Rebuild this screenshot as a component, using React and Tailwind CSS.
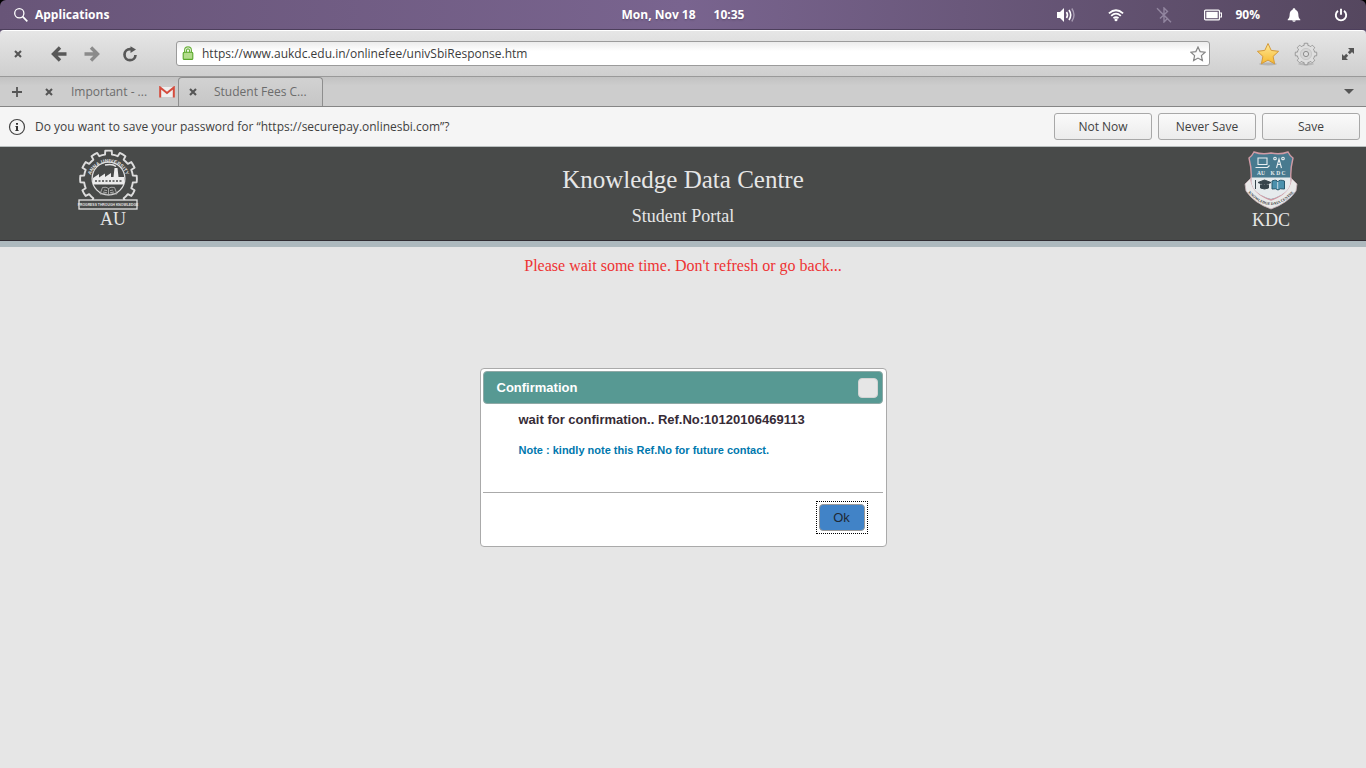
import React from 'react';

function polar(cx, cy, r, deg) {
  const a = (deg * Math.PI) / 180;
  return `${(cx + r * Math.sin(a)).toFixed(2)} ${(cy - r * Math.cos(a)).toFixed(2)}`;
}

function gearPath(cx, cy, outer, inner, teeth) {
  const step = 360 / teeth;
  let d = '';
  for (let i = 0; i < teeth; i++) {
    const a = i * step;
    d += `${i ? 'L' : 'M'}${polar(cx, cy, inner, a - step * 0.27)}`;
    d += `L${polar(cx, cy, outer, a - step * 0.22)}`;
    d += `A${outer} ${outer} 0 0 1 ${polar(cx, cy, outer, a + step * 0.22)}`;
    d += `L${polar(cx, cy, inner, a + step * 0.27)}`;
    d += `A${inner} ${inner} 0 0 1 ${polar(cx, cy, inner, a + step * 0.73)}`;
  }
  return d + 'Z';
}

const STAR = 'M12 1.5l3.2 6.9 7.4.9-5.5 5.1 1.5 7.4L12 18.1l-6.6 3.7 1.5-7.4L1.4 9.3l7.4-.9z';

function CloseIcon() {
  return (
    <svg className="size-2" viewBox="0 0 8 8" aria-hidden="true">
      <path d="M1 1l6 6M7 1L1 7" stroke="#555" strokeWidth="2.1" />
    </svg>
  );
}

function TopBar() {
  return (
    <div className="bg-black">
      <header className="grid h-[30px] grid-cols-[1fr_auto_1fr] items-center rounded-t-md border-b border-[#4d3f5c] bg-linear-to-r from-[#685578] via-[#79648f] to-[#55475f] text-xs font-bold text-white text-shadow-sm">
        <button className="flex items-center gap-[7px] pl-3.5">
          <svg className="size-3.5" viewBox="0 0 14 14" fill="none" stroke="white" aria-hidden="true">
            <circle cx="5.3" cy="5.3" r="4.6" strokeWidth="1.3" />
            <path d="M8.7 8.7l4.6 4.6" strokeWidth="1.7" />
          </svg>
          Applications
        </button>
        <div className="flex gap-[18px]">
          <span>Mon, Nov 18</span>
          <span>10:35</span>
        </div>
        <div className="flex items-center justify-end pr-[18px]">
          <button aria-label="Volume" className="mr-8">
            <svg className="h-4 w-5" viewBox="0 0 20 16" aria-hidden="true">
              <path d="M1 5h3l4-4v14l-4-4H1z" fill="white" />
              <path d="M10.5 5q2 3 0 6M13 3q3.4 5 0 10" fill="none" stroke="white" strokeWidth="1.6" />
              <path d="M15.8 1.5q4.4 6.5 0 13" fill="none" stroke="#a79bb2" strokeWidth="1.4" />
            </svg>
          </button>
          <button aria-label="Wireless" className="mr-8">
            <svg className="h-4 w-4" viewBox="0 0 16 16" fill="none" stroke="white" strokeWidth="1.8" aria-hidden="true">
              <path d="M.9 6.4q7.1-6.4 14.2 0M3.2 8.8q4.8-4.4 9.6 0M5.5 11.2q2.5-2.2 5 0" />
              <circle cx="8" cy="12.7" r="1.5" fill="white" stroke="none" />
            </svg>
          </button>
          <button aria-label="Bluetooth off" className="mr-8">
            <svg className="h-4 w-4" viewBox="0 0 16 16" fill="none" stroke="#9286a0" strokeWidth="1.4" aria-hidden="true">
              <path d="M4 4.5l7.5 7L8 15V1l3.500 3.500L4 11.5M1 1.200l14 14" />
            </svg>
          </button>
          <button aria-label="Battery" className="mr-[13px] flex items-center gap-[13px]">
            <svg className="h-3 w-[18px]" viewBox="0 0 18 12" aria-hidden="true">
              <rect x=".6" y="1.1" width="14.8" height="9.8" rx="1" fill="none" stroke="white" strokeWidth="1.2" />
              <rect x="2.3" y="2.800" width="11.4" height="6.4" fill="white" />
              <path d="M15.5 4h2v4h-2" fill="none" stroke="white" strokeWidth="1.2" />
            </svg>
            90%
          </button>
          <button aria-label="Notifications" className="mr-[33px] ml-3.5">
            <svg className="size-3.5" viewBox="0 0 14 14" fill="white" aria-hidden="true">
              <path d="M7 .3c.9 0 1.400.6 1.400 1.400 2 .7 2.800 2.300 2.900 4.300.1 3 .6 4.300 2 5.500v.7H.7v-.7c1.400-1.200 1.900-2.500 2-5.500.1-2 .9-3.600 2.900-4.300C5.600.9 6.100.3 7 .3zM5.200 12.500h3.600q-.3 1.300-1.800 1.300t-1.800-1.300z" />
            </svg>
          </button>
          <button aria-label="Power">
            <svg className="size-3.5" viewBox="0 0 14 14" fill="none" stroke="white" strokeWidth="1.9" aria-hidden="true">
              <path d="M4 2.900a5.200 5.200 0 1 0 6 0M7 .8v6" />
            </svg>
          </button>
        </div>
      </header>
    </div>
  );
}

function Toolbar() {
  return (
    <div className="flex h-[47px] items-center rounded-t border-t border-b border-t-white border-b-[#999] bg-linear-to-b from-[#e6e6e6] to-[#cfcfcf] pr-3">
      <button aria-label="Close window" className="ml-3.5">
        <CloseIcon />
      </button>
      <button aria-label="Back" className="ml-[29px]">
        <svg className="size-4" viewBox="0 0 16 16" fill="none" stroke="#585858" strokeWidth="3.4" aria-hidden="true">
          <path d="M15.500 8H3M9 1.500L2.500 8 9 14.500" />
        </svg>
      </button>
      <button aria-label="Forward" className="ml-[17px]">
        <svg className="size-4" viewBox="0 0 16 16" fill="none" stroke="#8b8b8b" strokeWidth="3.4" aria-hidden="true">
          <path d="M.5 8H13M7 1.500L13.500 8 7 14.500" />
        </svg>
      </button>
      <button aria-label="Reload" className="ml-[22px]">
        <svg className="size-4" viewBox="0 0 16 16" aria-hidden="true">
          <path d="M9 3.200H8a5.500 5.500 0 1 0 5.500 5.800" fill="none" stroke="#585858" strokeWidth="2.7" />
          <path d="M8.500.2L14 3.600 8.500 7z" fill="#585858" />
        </svg>
      </button>
      <div className="ml-[38px] flex h-[25px] flex-1 items-center rounded-[3px] border border-[#9b9b9b] bg-linear-to-b from-[#ececec] to-white to-40% pr-[3px] pl-[5px]">
        <svg className="mb-0.5 h-3.5 w-3 shrink-0" viewBox="0 0 12 14" aria-hidden="true">
          <path d="M2.600 7V4.200a3.400 3.400 0 0 1 6.800 0V7M4.500 7V4.300a1.500 1.500 0 0 1 3 0V7" fill="none" stroke="#6db33f" strokeWidth="1.2" />
          <rect x="1.200" y="6.200" width="9.6" height="7.2" rx="1" fill="#b3dc8c" stroke="#59a82b" strokeWidth="1.1" />
        </svg>
        <input
          aria-label="Address"
          defaultValue="https://www.aukdc.edu.in/onlinefee/univSbiResponse.htm"
          className="ml-2 min-w-0 flex-1 bg-transparent text-xs text-[#3c3c3c] outline-none"
        />
        <button aria-label="Bookmark this page">
          <svg className="size-4" viewBox="0 0 24 24" fill="#fbfbfb" stroke="#858585" strokeWidth="1.8" aria-hidden="true">
            <path d={STAR} />
          </svg>
        </button>
      </div>
      <button aria-label="Bookmarks" className="ml-[46px]">
        <svg className="size-6" viewBox="0 0 24 24" aria-hidden="true">
          <defs>
            <linearGradient id="gold" x1="0" y1="0" x2="0" y2="1">
              <stop offset="0" stopColor="#ffe998" />
              <stop offset="1" stopColor="#f6b92f" />
            </linearGradient>
          </defs>
          <ellipse cx="12" cy="22" rx="9" ry="1.5" fill="#b5b5b5" />
          <path d={STAR} fill="url(#gold)" stroke="#d49a3a" strokeLinejoin="round" />
        </svg>
      </button>
      <button aria-label="Menu" className="ml-3.5">
        <svg className="size-6" viewBox="0 0 24 24" aria-hidden="true">
          <ellipse cx="12" cy="22" rx="8" ry="1.5" fill="#b8b8b8" />
          <path d={gearPath(12, 12, 10.8, 8.8, 8)} fill="#dedede" stroke="#9a9a9a" strokeLinejoin="round" />
          <circle cx="12" cy="12" r="5.6" fill="#d5d5d5" stroke="#c8c8c8" />
          <circle cx="12" cy="12" r="2.6" fill="#dedede" stroke="#8d8d8d" />
        </svg>
      </button>
      <button aria-label="Full screen" className="ml-6">
        <svg className="size-3" viewBox="0 0 12 12" fill="#555" aria-hidden="true">
          <path d="M6 0h6v6L10 4 7.800 6.200 5.800 4.200 8 2zM6 12H0V6l2 2 2.200-2.200 2 2L4 10z" />
        </svg>
      </button>
    </div>
  );
}

function TabBar() {
  return (
    <nav className="flex h-[30px] items-stretch border-b border-[#858585] bg-linear-to-b from-[#c2c2c2] to-[#cdcdcd] to-30% pr-3 text-xs text-[#6c6c6c]">
      <button aria-label="New tab" className="pl-3">
        <svg className="size-2.5" viewBox="0 0 10 10" aria-hidden="true">
          <path d="M5 0v10M0 5h10" stroke="#555" strokeWidth="1.8" />
        </svg>
      </button>
      <div className="flex w-[156px] items-center pr-[3px] pl-[23px]">
        <button aria-label="Close tab">
          <CloseIcon />
        </button>
        <a href="#mail" className="ml-[18px]">Important - ...</a>
        <svg className="ml-auto h-3 w-4 shrink-0" viewBox="0 0 16 12" aria-hidden="true">
          <path d="M1 1h14v10H1z" fill="#efefef" />
          <path d="M1.200 11.500V1.500L8 7l6.800-5.500v10" fill="none" stroke="#d54b3d" strokeWidth="2" />
        </svg>
      </div>
      <div className="flex w-[145px] items-center rounded-t border-x border-t border-[#8e8e8e] bg-linear-to-b from-[#d2d2d2] to-[#c6c6c6] pl-2.5">
        <button aria-label="Close tab">
          <CloseIcon />
        </button>
        <a href="#fees" className="ml-[17px]">Student Fees C...</a>
      </div>
      <button aria-label="All tabs" className="ml-auto">
        <svg className="h-[5px] w-2.5" viewBox="0 0 10 5" aria-hidden="true">
          <path d="M0 0h10L5 5z" fill="#555" />
        </svg>
      </button>
    </nav>
  );
}

function PasswordBar() {
  return (
    <div className="flex h-10 items-center gap-1.5 border-b border-[#b9bfbf] bg-[#f5f5f5] px-1.5 text-xs text-[#3f3f3f]">
      <svg className="ml-0.5 size-[18px]" viewBox="0 0 18 18" aria-hidden="true">
        <circle cx="9" cy="9" r="7.5" fill="none" stroke="#444" strokeWidth="1.2" />
        <path d="M8 5h2v1.800H8zM7.500 8H10v4h.6v1H7.400v-1H8V9h-.5z" fill="#333" />
      </svg>
      <p className="mr-auto ml-[3px]">Do you want to save your password for “https://securepay.onlinesbi.com”?</p>
      {['Not Now', 'Never Save', 'Save'].map((label) => (
        <button key={label} className="h-[27px] w-[98px] rounded-[3px] border border-[#a8a8a8] bg-linear-to-b from-[#fafafa] to-[#ececec]">
          {label}
        </button>
      ))}
    </div>
  );
}

function UniversityLogo() {
  return (
    <svg className="h-[60px] w-[60px] overflow-visible" viewBox="0 0 60 60" role="img" aria-label="Anna University">
      <defs>
        <path id="auArc" d="M12 31a18.500 18.500 0 0 1 37 0" />
      </defs>
      <path d={gearPath(30.5, 29, 28.4, 24.6, 12)} fill="none" stroke="#dcdcdc" strokeWidth="1.9" strokeLinejoin="round" />
      <circle cx="30.5" cy="28.500" r="16.4" fill="none" stroke="#dcdcdc" strokeWidth="1.3" />
      <text fill="#e4e4e4" fontSize="5" fontWeight="bold" fontFamily="Liberation Sans, sans-serif">
        <textPath href="#auArc" startOffset="50%" textAnchor="middle">ANNA UNIVERSITY</textPath>
      </text>
      <path d="M15 34.500V28l6-4v3.500l6-4v3.500l6-4v4h2.500l1-9h3l1 9H46v7.500z" fill="#ececec" />
      <path d="M38 16.500q-3-3-11-1.500" stroke="#e4e4e4" strokeWidth="1.3" fill="none" />
      <path d="M17 31h28" stroke="#484a49" strokeWidth="1.3" strokeDasharray="2 1.5" />
      <path d="M24.500 37.500q4-1 6 1 2-2 6-1l2.500 6.500q-5-1-8.500 1-3.500-2-8.500-1zM30.500 38.500v6M26 40l3 .6M25 42l4 .8M35 40l-3 .6M36 42l-4 .8" fill="none" stroke="#b0b0b0" strokeWidth=".9" />
      <rect x="1" y="50" width="58" height="9" fill="#484a49" stroke="#e4e4e4" strokeWidth="1.3" />
      <text x="30" y="56" textAnchor="middle" fill="#e4e4e4" fontSize="3.400" fontWeight="bold" fontFamily="Liberation Sans, sans-serif">PROGRESS THROUGH KNOWLEDGE</text>
    </svg>
  );
}

function CentreLogo() {
  return (
    <svg className="h-[60px] w-[54px] overflow-visible" viewBox="0 0 54 60" role="img" aria-label="Knowledge Data Centre">
      <defs>
        <path id="kdcArc" d="M2 39Q27 69 52 39" />
      </defs>
      <path d="M7 27L1 33l1 7q8 12 25 18 17-6 25-18l1-7-6-6z" fill="#e9e9e9" stroke="#c9b3b8" strokeWidth=".8" />
      <path d="M10 1q8 3 17 1 9 2 17-1 2 4 5 6-3 12-2 22-2 14-20 20Q9 43 7 29 8 19 5 7q3-2 5-6z" fill="#487a8f" stroke="#d09ba5" strokeWidth="1.4" />
      <path d="M7.500 26.500h39v5Q45 43 27 48 9 43 7.500 31.500z" fill="#e6ebed" />
      <g fill="none" stroke="#e9eef0" strokeWidth="1.1">
        <path d="M14 7h9v6.500h-9zM11.500 16.500h12l2-2M32.500 17l2.500-9 2.500 9M33.500 13.500h3" />
        <circle cx="31" cy="7.500" r="1.300" />
        <circle cx="39" cy="7.500" r="1.300" />
      </g>
      <text y="24" textAnchor="middle" fill="#e9eef0" fontSize="5.500" fontWeight="bold" fontFamily="Liberation Serif, serif">
        <tspan x="17">AU</tspan>
        <tspan x="34">K D C</tspan>
      </text>
      <path d="M11.500 29v9" stroke="#38454c" />
      <path d="M14 31.500l6.500-2.500 6.500 2.500-6.500 2.500zM16.500 33.500v3.500q4 2 8 0v-3.500" fill="#38454c" stroke="#38454c" />
      <path d="M28 30q5-2 5.500 1 2-3 7-1v8q-5-1-6.500 1-2-2-6-1z" fill="#4b91ad" stroke="#27586d" />
      <path d="M33.700 31v7" stroke="#e6ebed" strokeWidth=".8" />
      <text fill="#403d40" fontSize="3.800" fontWeight="bold" fontFamily="Liberation Serif, serif">
        <textPath href="#kdcArc" startOffset="50%" textAnchor="middle">KNOWLEDGE DATA CENTRE</textPath>
      </text>
    </svg>
  );
}

function PortalHeader() {
  return (
    <header className="grid h-[100px] grid-cols-[1fr_auto_1fr] border-b-[6px] border-[#adb9be] bg-[#484a49] text-[#e6e6e6] shadow-[inset_0_-1px_0_#302c32]">
      <div className="ml-[78px] w-[60px] pt-[3px]">
        <UniversityLogo />
        <p className="-mt-[3px] pl-[22px] text-lg leading-6">AU</p>
      </div>
      <div className="pt-[17px] text-center">
        <h1 className="text-[25px] leading-8">Knowledge Data Centre</h1>
        <p className="mt-2 text-lg leading-6">Student Portal</p>
      </div>
      <div className="mr-[68px] flex w-[54px] flex-col items-center justify-self-end pt-1">
        <CentreLogo />
        <p className="-mt-[3px] text-lg leading-6">KDC</p>
      </div>
    </header>
  );
}

function ConfirmationDialog() {
  return (
    <section role="dialog" aria-labelledby="dialog-title" className="mx-auto mt-[90px] w-[407px] rounded border border-[#aaa] bg-white p-0.5 pr-[3px] pb-3 font-['Liberation_Sans',Arial,sans-serif] text-[13px]">
      <div className="flex h-[33px] items-center justify-between rounded border border-[#8fa9a6] bg-[#579993] pr-1 pl-[13px]">
        <h2 id="dialog-title" className="font-bold text-white">Confirmation</h2>
        <button aria-label="Close" className="size-5 rounded border border-[#d3d3d3] bg-[#e6e6e6]" />
      </div>
      <div className="h-[89px] border-b border-[#aaa] pt-1.5 pl-9 font-bold">
        <p className="leading-5 text-[#362b36]">wait for confirmation.. Ref.No:10120106469113</p>
        <p className="mt-3 text-[11px] leading-4 text-[#0078ae]">Note : kindly note this Ref.No for future contact.</p>
      </div>
      <div className="flex justify-end pt-[11px] pr-[18px] pb-[3px]">
        <div className="-m-[3px] border border-dotted border-black p-0.5">
          <button className="block h-[27px] w-[46px] rounded border border-[#999] bg-[#4183c7] text-[#1f2a36]">Ok</button>
        </div>
      </div>
    </section>
  );
}

export default function App() {
  return (
    <div className="flex min-h-screen flex-col bg-[#e6e6e6]">
      <div className="font-['Open_Sans','Noto_Sans',sans-serif]">
        <TopBar />
        <div className="bg-[#5f5070]">
          <Toolbar />
        </div>
        <TabBar />
        <PasswordBar />
      </div>
      <div className="font-['Liberation_Serif','Times_New_Roman',serif]">
        <PortalHeader />
        <main>
          <p className="pt-[7px] text-center text-base leading-6 text-[#ee3333]">Please wait some time. Don't refresh or go back...</p>
          <ConfirmationDialog />
        </main>
      </div>
    </div>
  );
}
